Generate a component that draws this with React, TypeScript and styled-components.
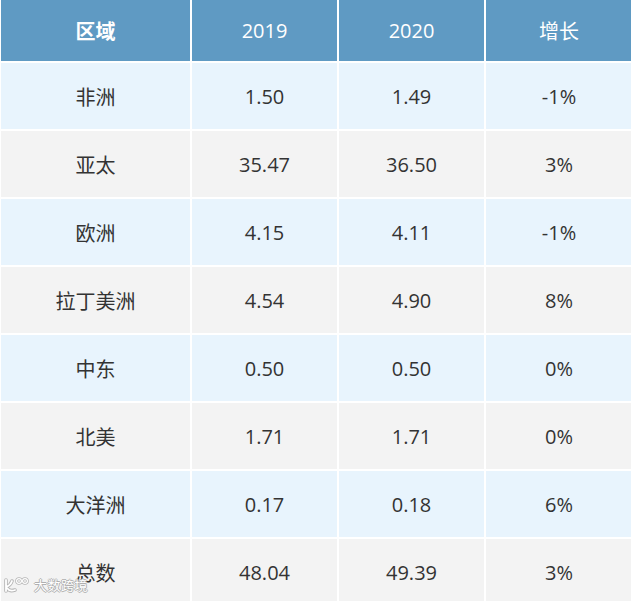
import styled, { createGlobalStyle } from "styled-components";

const GlobalStyle = createGlobalStyle`
    html, body {
        margin: 0;
        padding: 0;
        background: #ffffff;
    }
    body {
        font-family: "Open Sans", "Noto Sans CJK SC", sans-serif;
    }
`;

const rows = [
    ["非洲", "1.50", "1.49", "-1%"],
    ["亚太", "35.47", "36.50", "3%"],
    ["欧洲", "4.15", "4.11", "-1%"],
    ["拉丁美洲", "4.54", "4.90", "8%"],
    ["中东", "0.50", "0.50", "0%"],
    ["北美", "1.71", "1.71", "0%"],
    ["大洋洲", "0.17", "0.18", "6%"],
    ["总数", "48.04", "49.39", "3%"],
];

export default function App() {
    return (
        <Page>
            <GlobalStyle />
            <Table>
                <HeadCell $bold>区域</HeadCell>
                <HeadCell>2019</HeadCell>
                <HeadCell>2020</HeadCell>
                <HeadCell>增长</HeadCell>
                {rows.map((row, i) =>
                    row.map((value, j) => (
                        <Cell key={`${i}-${j}`} $alt={i % 2 === 1}>
                            {value}
                        </Cell>
                    )),
                )}
            </Table>
            <Watermark>
                <svg width="27" height="18" viewBox="0 0 27 18">
                    <g stroke="#b5b5b5" strokeWidth="3.6" fill="none" strokeLinecap="round">
                        <path d="M3 4 L3 15 M3 11 C6 10 8 8 9 5 M4 12 C6 15 9 15 12 14" />
                        <circle cx="16" cy="5" r="2.4" strokeWidth="2.8" />
                        <circle cx="22" cy="5" r="2.4" strokeWidth="2.8" />
                    </g>
                    <g stroke="#ffffff" strokeWidth="1.8" fill="none" strokeLinecap="round">
                        <path d="M3 4 L3 15 M3 11 C6 10 8 8 9 5 M4 12 C6 15 9 15 12 14" />
                        <circle cx="16" cy="5" r="2.4" strokeWidth="1.2" />
                        <circle cx="22" cy="5" r="2.4" strokeWidth="1.2" />
                    </g>
                </svg>
                <WatermarkText>大数跨境</WatermarkText>
            </Watermark>
        </Page>
    );
}

const Page = styled.div`
    position: relative;
    width: 631px;
    height: 601px;
    overflow: hidden;
`;

const Table = styled.div`
    display: grid;
    grid-template-columns: 189px 145px 145px 146px;
    grid-template-rows: 61px;
    grid-auto-rows: 66px;
    column-gap: 2px;
    row-gap: 2px;
    padding-left: 1px;
    background: #ffffff;
`;

const HeadCell = styled.div<{ $bold?: boolean }>`
    display: flex;
    align-items: center;
    justify-content: center;
    background: #5f9ac3;
    color: #ffffff;
    font-size: 20px;
    font-weight: ${(p) => (p.$bold ? 700 : 400)};
`;

const Cell = styled.div<{ $alt?: boolean }>`
    display: flex;
    align-items: center;
    justify-content: center;
    background: ${(p) => (p.$alt ? "#f3f3f3" : "#e8f4fd")};
    color: #333333;
    font-size: 20px;
`;

const Watermark = styled.div`
    position: absolute;
    left: 3px;
    top: 576px;
    display: flex;
    align-items: center;
    gap: 4px;
`;

const WatermarkText = styled.span`
    color: #ffffff;
    font-size: 13px;
    line-height: 18px;
    letter-spacing: 0.5px;
    text-shadow:
        1px 0 0 #b0b0b0,
        -1px 0 0 #b0b0b0,
        0 1px 0 #b0b0b0,
        0 -1px 0 #b0b0b0;
`;
